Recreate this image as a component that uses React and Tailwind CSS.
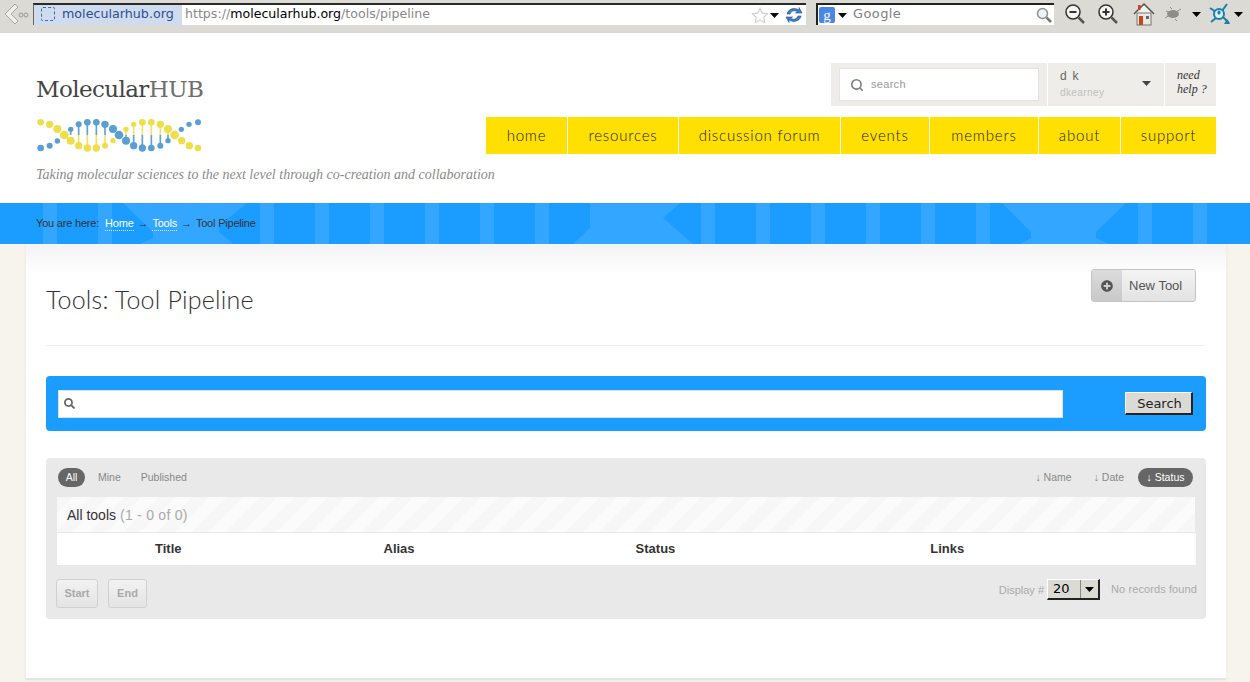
import { Search } from 'lucide-react';
import { FaPlusCircle, FaSearch } from 'react-icons/fa';

const navItems = [
  { label: 'home', width: 'w-[81px]' },
  { label: 'resources', width: 'w-[110px]' },
  { label: 'discussion forum', width: 'w-[161px]' },
  { label: 'events', width: 'w-[88px]' },
  { label: 'members', width: 'w-[108px]' },
  { label: 'about', width: 'w-[81px]' },
  { label: 'support', width: 'w-[95px]' },
];

const yellowDots = [
  [32, 37, 10], [59, 43, 11], [82, 57, 12], [103, 75, 13], [122, 92, 12], [146, 107, 11], [172, 114, 11], [199, 114, 11], [225, 107, 9], [249, 92, 8],
  [288, 58, 8], [311, 43, 8], [337, 37, 10], [364, 37, 10], [391, 43, 11], [414, 57, 12], [434, 75, 13], [455, 92, 11], [478, 107, 11], [504, 114, 10],
];
const blueDots = [
  [32, 114, 10], [59, 107, 9], [82, 93, 8], [122, 58, 8], [146, 43, 9], [172, 37, 10], [199, 37, 10], [225, 43, 11], [249, 57, 12], [267, 75, 13],
  [288, 92, 12], [311, 107, 11], [337, 114, 11], [364, 114, 10], [391, 107, 9], [414, 92, 8], [454, 58, 8], [477, 43, 8], [504, 37, 9],
];

function DnaLogo() {
  const blueTop = [[122, 58, 75], [146, 43, 107], [172, 37, 114], [199, 37, 114], [225, 43, 107]];
  const yellowTop = [[288, 58, 92], [311, 43, 107], [337, 37, 114], [364, 37, 114], [391, 43, 107], [414, 57, 92]];
  return (
    <svg width="168" height="36" viewBox="18 24 504 108" className="block">
      {blueTop.map(([x, y1, y2]) => (
        <g key={x}>
          <line x1={x} x2={x} y1={y1} y2="75" stroke="#5fa3d6" strokeWidth="5" />
          <line x1={x} x2={x} y1="75" y2={y2} stroke="#f0e264" strokeWidth="5" />
        </g>
      ))}
      {yellowTop.map(([x, y1, y2]) => (
        <g key={x}>
          <line x1={x} x2={x} y1={y1} y2="75" stroke="#f0e264" strokeWidth="5" />
          <line x1={x} x2={x} y1="75" y2={y2} stroke="#5fa3d6" strokeWidth="5" />
        </g>
      ))}
      {blueDots.map(([x, y, r]) => <circle key={`b${x}`} cx={x} cy={y} r={r} fill="#5a9fd4" />)}
      {yellowDots.map(([x, y, r]) => <circle key={`y${x}`} cx={x} cy={y} r={r} fill="#eede4a" />)}
    </svg>
  );
}

function BandPattern() {
  const stripes = [43, 98, 260, 315, 370, 425, 480, 535, 701, 756, 811, 866, 921, 976, 1138, 1193];
  return (
    <svg className="absolute inset-0" width="1250" height="41" viewBox="0 203 1250 41">
      {stripes.map((x) => <rect key={x} x={x} y="203" width="14" height="41" fill="#33a7ff" />)}
      <polygon points="112,203 123,203 153,232 153,238 140,244 233,244 219,232 219,226 247,203" fill="#33a7ff" />
      <polygon points="590,203 590,228 573,244 693,244 663,218 680,203" fill="#33a7ff" />
      <polygon points="1002,203 1031,232 1031,238 1020,244 1109,244 1096,238 1096,232 1126,203" fill="#33a7ff" />
    </svg>
  );
}

function BrowserBar() {
  return (
    <div className="flex h-[33px] items-start bg-[#dcdad5] font-['DejaVu_Sans',sans-serif]">
      <svg width="33" height="28" viewBox="0 0 33 28" className="shrink-0">
        <path d="M15 4 L5 14 L15 24 L18 21 L11 14 L18 7 Z" fill="#efeeeb" stroke="#a9a7a2" />
        <circle cx="21" cy="15" r="2" fill="none" stroke="#9a9893" />
        <circle cx="26" cy="15" r="2" fill="none" stroke="#9a9893" />
      </svg>
      <div className="mt-[3px] flex h-[22px] w-[773px] shrink-0 items-center border-t-2 border-l border-t-[#2a2a2a] border-l-[#666] bg-white">
        <div className="flex h-full w-[148px] shrink-0 items-center bg-[#cfdcf0] pb-[2px] pl-[7px] text-[12.7px] text-[#2b4f8c]">
          <span className="mr-[7px] h-[14px] w-[14px] rounded-[2px] border border-dashed border-[#4a6a98]" />
          molecularhub.org
        </div>
        <div className="ml-[3px] pb-[2px] text-[12.6px] text-[#888]">
          https://<span className="text-black">molecularhub.org</span>/tools/pipeline
        </div>
        <div className="ml-auto flex items-center pr-[3px]">
          <svg width="18" height="18" viewBox="0 0 24 24" className="mr-px">
            <path d="M12 3 L15 9.5 L22 10.3 L17 15 L18.4 22 L12 18.5 L5.6 22 L7 15 L2 10.3 L9 9.5 Z" fill="#fff" stroke="#cfcfcf" strokeWidth="1.5" />
          </svg>
          <svg width="9" height="5" viewBox="0 0 9 5" className="mr-[6px]"><path d="M0 0 H9 L4.5 5 Z" fill="#000" /></svg>
          <svg width="18" height="18" viewBox="0 0 18 18">
            <path d="M2 8 C3 3 9 1 14 4 L14 1.5 L17 7 L10.5 7 L12.5 5.5 C9 4 6 5 5 8 Z" fill="#3f7fc4" stroke="#1f4f8c" strokeWidth=".6" />
            <path d="M16 10 C15 15 9 17 4 14 L4 16.5 L1 11 L7.5 11 L5.5 12.5 C9 14 12 13 13 10 Z" fill="#3f7fc4" stroke="#1f4f8c" strokeWidth=".6" />
          </svg>
        </div>
      </div>
      <div className="mt-[3px] ml-[10px] flex h-[22px] w-[238px] shrink-0 items-center border-t-2 border-l-2 border-t-[#222] border-l-[#222] bg-white">
        <div className="ml-[1px] flex h-[16px] w-[16px] shrink-0 items-center justify-center rounded-[2px] bg-[#4a86e8] font-['Liberation_Serif',serif] text-[15px] leading-none text-white">g</div>
        <svg width="9" height="5" viewBox="0 0 9 5" className="ml-[3px]"><path d="M0 0 H9 L4.5 5 Z" fill="#000" /></svg>
        <span className="ml-[6px] pb-[2px] text-[13px] tracking-[0.4px] text-[#808080]">Google</span>
        <svg width="18" height="18" viewBox="0 0 18 18" className="ml-auto mr-[1px]">
          <circle cx="7.5" cy="7.5" r="5" fill="#eef2f4" stroke="#8f9294" strokeWidth="1.5" />
          <line x1="11.5" y1="11.5" x2="16" y2="16" stroke="#777" strokeWidth="2.5" />
        </svg>
      </div>
      <div className="mt-[2px] ml-[9px] flex items-center">
        <svg width="24" height="24" viewBox="0 0 24 24">
          <circle cx="10" cy="10" r="7" fill="#f4f4f2" stroke="#333" strokeWidth="1.5" />
          <line x1="6.5" y1="10" x2="13.5" y2="10" stroke="#333" strokeWidth="2" />
          <line x1="15.5" y1="15.5" x2="21" y2="21" stroke="#555" strokeWidth="2.5" />
        </svg>
        <svg width="24" height="24" viewBox="0 0 24 24" className="ml-[9px]">
          <circle cx="10" cy="10" r="7" fill="#f4f4f2" stroke="#333" strokeWidth="1.5" />
          <path d="M6.5 10 H13.5 M10 6.5 V13.5" stroke="#333" strokeWidth="2" />
          <line x1="15.5" y1="15.5" x2="21" y2="21" stroke="#555" strokeWidth="2.5" />
        </svg>
        <svg width="24" height="24" viewBox="0 0 24 24" className="ml-[12px]">
          <path d="M2 12 L12 2 L22 12" fill="#f2f2ee" stroke="#55534f" strokeWidth="1.5" />
          <rect x="5" y="11" width="14" height="12" fill="#e9e8e2" stroke="#77756f" />
          <rect x="7" y="14" width="4" height="9" fill="#c8451c" />
          <rect x="14" y="14" width="3" height="3" fill="#666" />
          <rect x="6" y="3" width="2.5" height="5" fill="#c8451c" />
        </svg>
        <svg width="20" height="18" viewBox="0 0 20 18" className="ml-[7px]">
          <ellipse cx="10" cy="9" rx="6" ry="4" fill="#8d8d8a" />
          <path d="M2 13 L7 10 M13 7 L18 4 M9 4 L7 2 M12 14 L14 16 M3 6 L8 8" stroke="#8d8d8a" strokeWidth="1" />
        </svg>
        <svg width="9" height="5" viewBox="0 0 9 5" className="ml-[9px]"><path d="M0 0 H9 L4.5 5 Z" fill="#000" /></svg>
        <svg width="24" height="24" viewBox="0 0 24 24" className="ml-[6px]">
          <path d="M3 6 L9 10 M20 2 L15 9 M4 20 L9 16 M16 15 L22 21" stroke="#1c7fa8" strokeWidth="2" />
          <circle cx="12" cy="12" r="5" fill="#d8eef8" stroke="#1c7fa8" strokeWidth="2" />
          <rect x="10.5" y="8.5" width="3" height="4" rx="1.5" fill="#1c7fa8" />
          <path d="M17 22 L23 22 L20 17 Z" fill="#1c7fa8" />
        </svg>
        <svg width="9" height="5" viewBox="0 0 9 5" className="ml-[3px]"><path d="M0 0 H9 L4.5 5 Z" fill="#000" /></svg>
      </div>
    </div>
  );
}

function SiteHeader() {
  return (
    <header className="flex h-[170px] justify-between bg-white pr-[34px] pl-[36px]">
      <div className="w-[450px] pt-[40px]">
        <div className="font-['DejaVu_Serif',serif] text-[23px] leading-[32px] tracking-[-0.6px] text-[#444]">
          Molecular<span className="text-[#6e6e6e]">HUB</span>
        </div>
        <div className="mt-[13px]"><DnaLogo /></div>
        <p className="mt-[12px] whitespace-nowrap font-['Liberation_Serif',serif] text-[14px] leading-[18px] text-[#8a8a8a] italic">
          Taking molecular sciences to the next level through co-creation and collaboration
        </p>
      </div>
      <div className="flex w-[730px] flex-col items-end pt-[30px]">
        <div className="flex h-[43px] gap-px">
          <div className="flex w-[216px] items-center justify-center bg-[#eeede9]">
            <div className="flex h-[33px] w-[200px] items-center border border-[#e4e3df] bg-white pl-[10px]">
              <Search size={14} strokeWidth={2.8} className="text-[#808080]" />
              <span className="ml-[7px] font-['Liberation_Sans',sans-serif] text-[11px] tracking-[0.3px] text-[#999]">search</span>
            </div>
          </div>
          <div className="relative w-[116px] bg-[#eeede9] pt-[6px] pl-[12px] font-['Liberation_Sans',sans-serif]">
            <div className="text-[12px] leading-[15px] tracking-[1.3px] text-[#666]">d k</div>
            <div className="mt-px text-[10px] leading-[15px] tracking-[0.4px] text-[#c0c0c0]">dkearney</div>
            <svg width="9" height="5" viewBox="0 0 9 5" className="absolute top-[18px] right-[13px]"><path d="M0 0 H9 L4.5 5 Z" fill="#444" /></svg>
          </div>
          <div className="w-[51px] bg-[#eeede9] pt-[5px] pl-[12px] font-['Liberation_Serif',serif] text-[12px] leading-[14px] text-[#333] italic">
            need<br />help ?
          </div>
        </div>
        <nav className="mt-[11px] flex h-[37px] gap-px">
          {navItems.map((item) => (
            <a key={item.label} className={`flex items-center justify-center bg-[#ffe000] font-['Lato',sans-serif] text-[15px] font-light tracking-[0.8px] text-[#222] ${item.width}`}>
              {item.label}
            </a>
          ))}
        </nav>
      </div>
    </header>
  );
}

function Breadcrumb() {
  return (
    <div className="relative h-[41px] bg-[#1a9dff]">
      <BandPattern />
      <div className="relative flex h-full items-center pl-[36px] font-['Liberation_Sans',sans-serif] text-[11px] tracking-[-0.2px] text-[#333]">
        You are here:
        <a className="ml-[6px] border-b border-dotted border-[#d5ecff] leading-[14px] text-white">Home</a>
        <span className="mx-[4px] font-bold">→</span>
        <a className="border-b border-dotted border-[#d5ecff] leading-[14px] text-white">Tools</a>
        <span className="mx-[4px] font-bold">→</span>
        Tool Pipeline
      </div>
    </div>
  );
}

function Panel() {
  return (
    <div className="mt-[27px] h-[161px] rounded-[4px] bg-[#e9e9e9] px-[11px] pt-[10px] font-['Liberation_Sans',sans-serif]">
      <div className="flex h-[19px] items-center justify-between pr-[2px] pl-[1px] text-[10.5px] text-[#888]">
        <div className="flex items-center">
          <span className="flex h-[19px] w-[27px] items-center justify-center rounded-full bg-[#666] text-white">All</span>
          <span className="ml-[13px]">Mine</span>
          <span className="ml-[20px]">Published</span>
        </div>
        <div className="flex items-center">
          <span>↓ Name</span>
          <span className="ml-[22px]">↓ Date</span>
          <span className="ml-[14px] flex h-[19px] w-[55px] items-center justify-center rounded-full bg-[#666] text-white">↓ Status</span>
        </div>
      </div>
      <div className="mt-[10px] flex h-[35px] w-[1138px] items-center bg-[repeating-linear-gradient(135deg,#f7f7f7_0,#f7f7f7_12px,#fbfbfb_12px,#fbfbfb_24px)] pt-[1px] pl-[10px] text-[14px] text-[#333]">
        All tools<span className="ml-[4px] tracking-[0.25px] text-[#aaa]">(1 - 0 of 0)</span>
      </div>
      <div className="mt-px flex h-[32px] w-[1139px] items-center border-r-2 border-r-[#fbfbfb] bg-white text-[13px] font-bold text-[#333]">
        <span className="ml-[98px]">Title</span>
        <span className="ml-[202px]">Alias</span>
        <span className="ml-[221px]">Status</span>
        <span className="ml-[255px]">Links</span>
      </div>
      <div className="mt-[14px] flex items-start">
        <button className="h-[29px] w-[42px] -translate-x-px rounded-[3px] border border-[#d0d0d0] bg-gradient-to-b from-[#f2f2f2] to-[#e4e4e4] text-[11px] font-bold text-[#aaa]">Start</button>
        <button className="ml-[10px] h-[29px] w-[39px] -translate-x-px rounded-[3px] border border-[#d0d0d0] bg-gradient-to-b from-[#f2f2f2] to-[#e4e4e4] text-[11px] font-bold text-[#aaa]">End</button>
        <div className="ml-auto flex translate-x-[2px] items-center text-[11px] text-[#aaa]">
          <span className="mr-[3px] translate-y-px">Display #</span>
          <div className="flex h-[21px] w-[53px] items-center justify-between border-t border-l border-b-2 border-r-2 border-t-white border-l-white border-r-[#222] border-b-[#222] bg-[#dcdad5] pl-[5px] font-['DejaVu_Sans',sans-serif] text-[13px] text-black">
            20
            <span className="flex h-full w-[18px] items-center justify-center border-l border-l-[#888]">
              <svg width="9" height="5" viewBox="0 0 9 5"><path d="M0 0 H9 L4.5 5 Z" fill="#000" /></svg>
            </span>
          </div>
          <span className="ml-[11px] tracking-[0.1px]">No records found</span>
        </div>
      </div>
    </div>
  );
}

function ContentCard() {
  return (
    <main className="ml-[26px] h-[436px] w-[1200px] border-b-2 border-b-[#e4e4e4] bg-white bg-gradient-to-b from-[#f3f3f3] to-white to-[7%] px-[20px] shadow-[0_0_4px_rgba(0,0,0,0.06)]">
      <div className="flex h-[102px] items-start justify-between border-b border-b-[#eeeeee]">
        <h1 className="mt-[40px] font-['Lato',sans-serif] text-[25px] leading-[30px] font-light tracking-[0.2px] text-[#333]">Tools: Tool Pipeline</h1>
        <button className="mt-[25px] mr-[10px] flex h-[33px] w-[105px] overflow-hidden rounded-[3px] border border-[#c4c4c4] bg-gradient-to-b from-[#f4f4f4] to-[#e2e2e2] font-['Liberation_Sans',sans-serif] text-[13px] text-[#555]">
          <span className="flex h-full w-[30px] items-center justify-center bg-gradient-to-b from-[#dcdcdc] to-[#c8c8c8]">
            <FaPlusCircle size={12} className="text-[#555]" />
          </span>
          <span className="flex h-full flex-1 items-center pl-[7px]">New Tool</span>
        </button>
      </div>
      <div className="mt-[30px] flex h-[55px] items-center justify-between rounded-[4px] bg-[#1a9dff] pr-[13px] pl-[12px]">
        <div className="flex h-[28px] w-[1005px] items-center border border-[#e2e2e2] bg-white pl-[5px]">
          <FaSearch size={11} className="text-[#666]" />
        </div>
        <button className="h-[23px] w-[68px] border-t border-l border-r-2 border-b-2 border-t-white border-l-white border-r-[#222] border-b-[#222] bg-[#dcdad5] pt-px pl-[2px] font-['DejaVu_Sans',sans-serif] text-[13px] text-[#222]">
          Search
        </button>
      </div>
      <Panel />
    </main>
  );
}

export default function App() {
  return (
    <div className="h-[682px] w-[1250px] overflow-hidden bg-[#f7f4ee]">
      <BrowserBar />
      <SiteHeader />
      <Breadcrumb />
      <ContentCard />
    </div>
  );
}
